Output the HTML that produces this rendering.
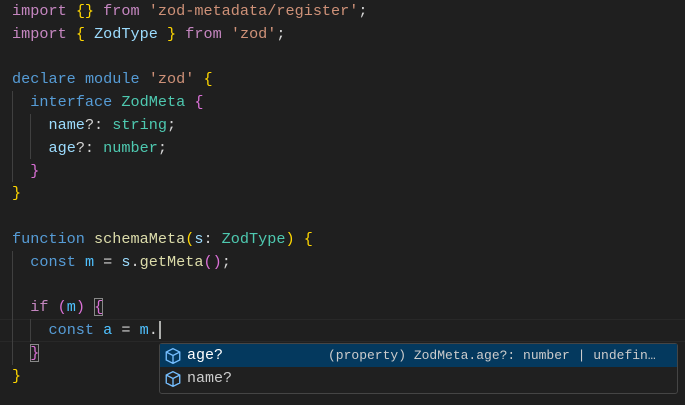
<!DOCTYPE html>
<html><head><meta charset="utf-8"><style>
body{margin:0;width:685px;height:405px;background:#1f1f1f;overflow:hidden;position:relative;font-family:"Liberation Mono",monospace;}
.code{position:absolute;left:12px;top:0;font-size:15.2px;line-height:22.8px;white-space:pre;color:#d4d4d4;}
.k{color:#569cd6}.c{color:#c586c0}.s{color:#ce9178}.t{color:#4ec9b0}.v{color:#9cdcfe}.cn{color:#4fc1ff}.f{color:#dcdcaa}
.b1{color:#ffd700}.b2{color:#da70d6}.b3{color:#179fff}
.g{position:absolute;width:1px;background:#404040}
.box{outline:1px solid #888;outline-offset:-1px}
.cur{position:absolute;left:0;top:319px;width:685px;height:21px;border-top:1px solid #282828;border-bottom:1px solid #282828}
.sw{position:absolute;left:159px;top:343px;width:517px;height:49px;background:#202020;border:1px solid #454545;border-radius:3px;font-size:15px}
.row{position:relative;height:23px;line-height:23px}
.sel{background:#04395e;color:#fff}
.row .l{position:absolute;left:27px}
.row .d{position:absolute;left:168px;font-size:13px;color:#ccc}
.row svg{position:absolute;left:4px;top:3px}
</style></head><body>
<div class="cur"></div>
<div class="g" style="left:12px;top:91px;height:91px"></div>
<div class="g" style="left:30px;top:114px;height:45px"></div>
<div class="g" style="left:12px;top:251px;height:114px"></div>
<div class="g" style="left:30px;top:342px;height:0"></div>
<div class="g" style="left:30px;top:319px;height:23px"></div>
<div class="code"><span class="c">import</span> <span class="b1">{}</span> <span class="c">from</span> <span class="s">'zod-metadata/register'</span>;
<span class="c">import</span> <span class="b1">{</span> <span class="v">ZodType</span> <span class="b1">}</span> <span class="c">from</span> <span class="s">'zod'</span>;

<span class="k">declare</span> <span class="k">module</span> <span class="s">'zod'</span> <span class="b1">{</span>
  <span class="k">interface</span> <span class="t">ZodMeta</span> <span class="b2">{</span>
    <span class="v">name</span>?: <span class="t">string</span>;
    <span class="v">age</span>?: <span class="t">number</span>;
  <span class="b2">}</span>
<span class="b1">}</span>

<span class="k">function</span> <span class="f">schemaMeta</span><span class="b1">(</span><span class="v">s</span>: <span class="t">ZodType</span><span class="b1">)</span> <span class="b1">{</span>
  <span class="k">const</span> <span class="cn">m</span> = <span class="v">s</span>.<span class="f">getMeta</span><span class="b2">()</span>;

  <span class="c">if</span> <span class="b2">(</span><span class="cn">m</span><span class="b2">)</span> <span class="b2 box">{</span>
    <span class="k">const</span> <span class="cn">a</span> = <span class="cn">m</span>.<span style="border-left:2px solid #aeafad;margin-left:1px"></span>
  <span class="b2 box">}</span>
<span class="b1">}</span></div>
<div class="sw">
<div class="row sel"><svg width="18" height="18" viewBox="0 0 16 16" fill="none" stroke="#75beff" stroke-width="1.2"><path d="M8 1.5L14 4.5V11.5L8 14.5L2 11.5V4.5Z M2 4.5L8 7.5L14 4.5 M8 7.5V14.5"/></svg><span class="l">age?</span><span class="d">(property) ZodMeta.age?: number | undefin…</span></div>
<div class="row" style="color:#ccc"><svg width="18" height="18" viewBox="0 0 16 16" fill="none" stroke="#75beff" stroke-width="1.2"><path d="M8 1.5L14 4.5V11.5L8 14.5L2 11.5V4.5Z M2 4.5L8 7.5L14 4.5 M8 7.5V14.5"/></svg><span class="l">name?</span></div>
</div>
</body></html>
